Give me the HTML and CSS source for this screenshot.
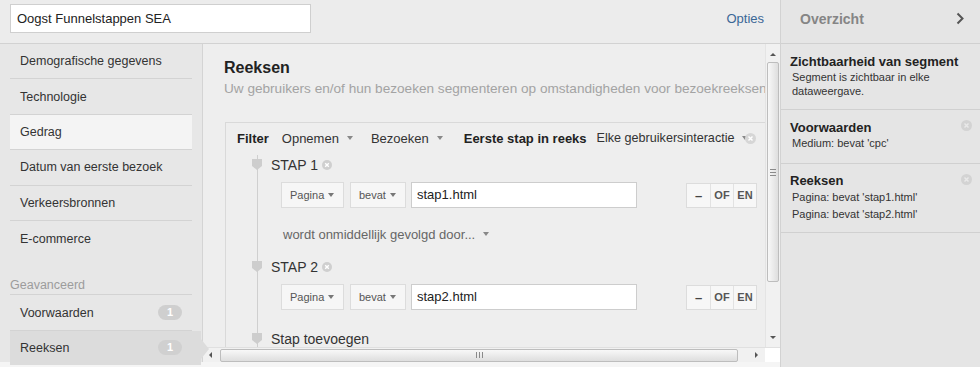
FILE: index.html
```html
<!DOCTYPE html>
<html lang="nl">
<head>
  <meta charset="UTF-8" />
  <title>Segment bewerken</title>
  <link rel="stylesheet" href="styles.css">
</head>
<body>
  <div class="app">
    <div class="editor">
      <header class="topbar">
        <div class="name-input">Oogst Funnelstappen SEA</div>
        <a class="options">Opties</a>
      </header>

      <div class="workspace">
        <nav class="nav">
          <div class="nav-item">Demografische gegevens</div>
          <div class="nav-item">Technologie</div>
          <div class="nav-item active">Gedrag</div>
          <div class="nav-item">Datum van eerste bezoek</div>
          <div class="nav-item">Verkeersbronnen</div>
          <div class="nav-item last">E-commerce</div>

          <div class="nav-group">Geavanceerd</div>
          <div class="nav-item">Voorwaarden <span class="badge">1</span></div>
          <div class="nav-item selected">Reeksen <span class="badge">1</span></div>
        </nav>

        <main class="main">
          <div class="viewport">
            <div class="content">
              <h2 class="title">Reeksen</h2>
              <p class="subtitle">Uw gebruikers en/of hun bezoeken segmenteren op omstandigheden voor bezoekreeksen.</p>

              <div class="filter-box">
                <div class="filter-row">
                  <b class="f-label">Filter</b>
                  <span class="drop f-include">Opnemen <i class="caret"></i></span>
                  <span class="drop f-scope">Bezoeken <i class="caret"></i></span>
                  <b class="f-first">Eerste stap in reeks</b>
                  <span class="drop f-any">Elke gebruikersinteractie <i class="caret"></i></span>
                  <svg class="remove dim" width="11" height="11" viewBox="0 0 11 11"><circle cx="5.5" cy="5.5" r="5.5" fill="#d6d6d6"/><path d="M3.5 3.5l4 4M7.5 3.5l-4 4" stroke="#fff" stroke-width="1.5"/></svg>
                </div>

                <div class="steps">
                  <div class="step-head">
                    <svg class="marker" width="10" height="11" viewBox="0 0 10 11"><path d="M0 0h10v7l-5 4l-5-4z" fill="#cdcdcd"/></svg>
                    STAP 1
                    <svg class="remove" width="10" height="10" viewBox="0 0 10 10"><circle cx="5" cy="5" r="5" fill="#cfcfcf"/><path d="M3.2 3.2l3.6 3.6M6.8 3.2l-3.6 3.6" stroke="#fff" stroke-width="1.4"/></svg>
                  </div>
                  <div class="cond-row">
                    <span class="select wide">Pagina <i class="caret"></i></span>
                    <span class="select">bevat <i class="caret"></i></span>
                    <div class="value">stap1.html</div>
                    <div class="logic">
                      <span class="minus">&ndash;</span><span>OF</span><span>EN</span>
                    </div>
                  </div>

                  <div class="follow">wordt onmiddellijk gevolgd door... <i class="caret"></i></div>

                  <div class="step-head step2">
                    <svg class="marker" width="10" height="11" viewBox="0 0 10 11"><path d="M0 0h10v7l-5 4l-5-4z" fill="#cdcdcd"/></svg>
                    STAP 2
                    <svg class="remove" width="10" height="10" viewBox="0 0 10 10"><circle cx="5" cy="5" r="5" fill="#cfcfcf"/><path d="M3.2 3.2l3.6 3.6M6.8 3.2l-3.6 3.6" stroke="#fff" stroke-width="1.4"/></svg>
                  </div>
                  <div class="cond-row">
                    <span class="select wide">Pagina <i class="caret"></i></span>
                    <span class="select">bevat <i class="caret"></i></span>
                    <div class="value">stap2.html</div>
                    <div class="logic">
                      <span class="minus">&ndash;</span><span>OF</span><span>EN</span>
                    </div>
                  </div>

                  <div class="step-head add">
                    <svg class="marker" width="10" height="11" viewBox="0 0 10 11"><path d="M0 0h10v7l-5 4l-5-4z" fill="#cdcdcd"/></svg>
                    Stap toevoegen
                  </div>
                </div>
              </div>
            </div>

            <div class="vscroll">
              <span class="arrow up"></span>
              <div class="vthumb"><span class="grip"></span></div>
              <span class="arrow down"></span>
            </div>
          </div>

          <div class="hscroll">
            <span class="arrow left"></span>
            <div class="hthumb"><span class="grip"></span></div>
            <span class="arrow right"></span>
            <span class="corner"></span>
          </div>
        </main>
      </div>
      <div class="footer-strip"></div>
    </div>

    <aside class="summary">
      <div class="summary-head">
        <span>Overzicht</span>
        <svg width="8" height="13" viewBox="0 0 8 13"><path d="M1.5 1.5l5 5l-5 5" fill="none" stroke="#555" stroke-width="2"/></svg>
      </div>
      <section class="summary-block">
        <h3>Zichtbaarheid van segment</h3>
        <p>Segment is zichtbaar in elke dataweergave.</p>
      </section>
      <section class="summary-block cond">
        <h3>Voorwaarden</h3>
        <p>Medium: bevat 'cpc'</p>
        <svg class="block-remove" width="11" height="11" viewBox="0 0 11 11"><circle cx="5.5" cy="5.5" r="5.5" fill="#d3d3d3"/><path d="M3.5 3.5l4 4M7.5 3.5l-4 4" stroke="#e9e9e9" stroke-width="1.5"/></svg>
      </section>
      <section class="summary-block seq">
        <h3>Reeksen</h3>
        <p>Pagina: bevat 'stap1.html'</p>
        <p>Pagina: bevat 'stap2.html'</p>
        <svg class="block-remove" width="11" height="11" viewBox="0 0 11 11"><circle cx="5.5" cy="5.5" r="5.5" fill="#d3d3d3"/><path d="M3.5 3.5l4 4M7.5 3.5l-4 4" stroke="#e9e9e9" stroke-width="1.5"/></svg>
      </section>
    </aside>
  </div>
</body>
</html>
```

FILE: styles.css
```css
* { margin: 0; padding: 0; box-sizing: border-box; }

body {
  width: 980px;
  height: 367px;
  overflow: hidden;
  font-family: "Liberation Sans", Arial, sans-serif;
  font-size: 13px;
  color: #333;
  background: #f4f4f4;
}

.app {
  display: flex;
  height: 367px;
}

/* left side: name bar, navigation and editor */
.editor {
  width: 780px;
  display: flex;
  flex-direction: column;
}

.topbar {
  height: 44px;
  border-bottom: 1px solid #d2d2d2;
  background: #ececec;
  display: flex;
  align-items: flex-start;
  padding: 4px 16px 0 10px;
}

.name-input {
  width: 301px;
  height: 29px;
  background: #fff;
  border: 1px solid #cfcfcf;
  padding: 0 6px;
  line-height: 27px;
  color: #222;
}

.options {
  margin-left: auto;
  margin-top: 7px;
  color: #3a6796;
  line-height: 16px;
}

.workspace {
  display: flex;
  height: 318px;
}

.nav {
  width: 203px;
  background: #e7e7e7;
  border-right: 1px solid #d4d4d4;
  position: relative;
  z-index: 2;
  font-size: 12.5px;
}

.nav-item {
  position: relative;
  margin: 0 10px;
  height: 35.4px;
  padding: 0 10px;
  display: flex;
  align-items: center;
  border-bottom: 1px solid #d3d3d3;
  color: #333;
}

.nav-item.active { background: #f4f4f4; }
.nav-item.last { border-bottom: none; }

.nav-group {
  margin: 22px 10px 0;
  height: 17px;
  line-height: 15px;
  color: #9c9c9c;
  border-bottom: 1px solid #d3d3d3;
}

.nav-item.selected {
  background: #dcdcdc;
  margin-right: 1px;
  padding-right: 19px;
  border-bottom: none;
  height: 34px;
}

.nav-item.selected::after {
  content: "";
  position: absolute;
  right: -8px;
  top: 8px;
  border-left: 8px solid #dcdcdc;
  border-top: 10px solid transparent;
  border-bottom: 10px solid transparent;
}

.badge {
  margin-left: auto;
  width: 24px;
  height: 15px;
  border-radius: 8px;
  background: #cfcfcf;
  color: #fff;
  font-weight: bold;
  font-size: 11px;
  line-height: 15px;
  text-align: center;
}

.selected .badge { background: #d0d0d0; }

/* editor pane */
.main {
  width: 577px;
  background: #eeeeee;
  display: flex;
  flex-direction: column;
}

.viewport {
  display: flex;
  height: 303px;
}

.content {
  width: 562px;
  overflow: hidden;
  padding: 14px 0 0 21px;
}

.title {
  font-size: 16px;
  line-height: 20px;
  color: #222;
}

.subtitle {
  margin-top: 3px;
  line-height: 16px;
  font-size: 13.6px;
  color: #a3a3a3;
  white-space: nowrap;
}

.filter-box {
  margin-top: 25px;
  margin-left: 1px;
  width: 620px;
  border-top: 1px solid #d9d9d9;
  border-left: 1px solid #d9d9d9;
  padding: 5px 0 0 11px;
}

.filter-row {
  display: flex;
  align-items: center;
  height: 20px;
  color: #333;
  white-space: nowrap;
}

.filter-row b { color: #222; }
.f-include { margin-left: 13px; }
.f-scope { margin-left: 18px; }
.f-first { margin-left: 21px; }
.f-any { margin-left: 10px; font-size: 12.6px; }

.drop, .select, .follow {
  display: inline-flex;
  align-items: center;
  white-space: nowrap;
}

.caret {
  display: inline-block;
  margin-left: 8px;
  border-top: 4px solid #888;
  border-left: 3.5px solid transparent;
  border-right: 3.5px solid transparent;
}

.filter-row .remove { margin-left: -3px; margin-top: 1px; }

.steps {
  margin: 7px 0 0 20px;
  border-left: 1px solid #cfcfcf;
  padding-left: 13px;
  height: 200px;
}

.step-head {
  position: relative;
  height: 20px;
  display: flex;
  align-items: center;
  font-size: 14px;
  color: #333;
}

.step-head .marker {
  position: absolute;
  left: -19px;
  top: 4px;
}

.step-head .remove { margin-left: 4px; }

.step2 { margin-top: 13px; }
.add { margin-top: 19px; }

.cond-row {
  display: flex;
  align-items: center;
  margin-top: 7px;
  padding-left: 10px;
  height: 26px;
}

.select {
  height: 26px;
  background: #f6f6f6;
  border: 1px solid #dcdcdc;
  padding: 0 9px 0 8px;
  font-size: 11px;
  color: #555;
  margin-right: 5px;
  width: 56px;
  justify-content: space-between;
}

.select.wide { width: 63px; margin-right: 6px; }
.select .caret { margin-left: 0; border-top-color: #777; }

.value {
  width: 226px;
  height: 26px;
  background: #fff;
  border: 1px solid #cdcdcd;
  padding-left: 5px;
  line-height: 24px;
  color: #222;
}

.logic {
  margin-left: 49px;
  display: flex;
  height: 25px;
  border: 1px solid #dcdcdc;
  background: #f7f7f7;
}

.logic span {
  width: 23px;
  display: flex;
  align-items: center;
  justify-content: center;
  font-size: 11px;
  font-weight: bold;
  color: #555;
  border-left: 1px solid #e2e2e2;
}

.logic span:first-child { border-left: none; }
.logic .minus { font-size: 13px; color: #444; }

.follow {
  margin-top: 16px;
  padding-left: 12px;
  height: 20px;
  color: #666;
}

/* scrollbars */
.vscroll {
  width: 15px;
  background: #f1f1f1;
  border-left: 1px solid #e4e4e4;
  display: flex;
  flex-direction: column;
  align-items: center;
}

.arrow {
  display: block;
  flex: none;
}

.arrow.up {
  margin: 9px 0 6px;
  border-bottom: 3px solid #555;
  border-left: 3px solid transparent;
  border-right: 3px solid transparent;
}

.arrow.down {
  margin: auto 0 8px;
  border-top: 3px solid #555;
  border-left: 3px solid transparent;
  border-right: 3px solid transparent;
}

.vthumb {
  width: 12px;
  height: 220px;
  border: 1px solid #bdbdbd;
  border-radius: 2px;
  background: linear-gradient(to right, #f8f8f8, #dedede);
  display: flex;
  align-items: center;
  justify-content: center;
}

.grip {
  width: 6px;
  height: 7px;
  background: repeating-linear-gradient(to bottom, #8a8a8a 0 1px, transparent 1px 3px);
}

.hscroll {
  height: 15px;
  display: flex;
  align-items: center;
  background: #f1f1f1;
  border-top: 1px solid #e0e0e0;
}

.arrow.left {
  margin: 0 8px 0 6px;
  border-right: 3px solid #555;
  border-top: 3px solid transparent;
  border-bottom: 3px solid transparent;
}

.hthumb {
  width: 518px;
  height: 13px;
  border: 1px solid #bdbdbd;
  border-radius: 2px;
  background: linear-gradient(to bottom, #f8f8f8, #dedede);
  display: flex;
  align-items: center;
  justify-content: center;
}

.hthumb .grip {
  width: 7px;
  height: 6px;
  background: repeating-linear-gradient(to right, #8a8a8a 0 1px, transparent 1px 3px);
}

.arrow.right {
  margin-left: 17px;
  border-left: 3px solid #555;
  border-top: 3px solid transparent;
  border-bottom: 3px solid transparent;
}

.corner {
  margin-left: auto;
  width: 15px;
  height: 15px;
  background: #fff;
}

.footer-strip {
  flex: 1;
  background: #f5f5f5;
}

/* summary panel */
.summary {
  width: 200px;
  background: #e5e5e5;
  border-left: 1px solid #d2d2d2;
}

.summary-head {
  height: 44px;
  border-bottom: 1px solid #d0d0d0;
  display: flex;
  align-items: center;
  padding: 0 16px 6px 19px;
  font-size: 14px;
  font-weight: bold;
  color: #858585;
}

.summary-head svg { margin-left: auto; }

.summary-block {
  position: relative;
  border-bottom: 1px solid #d0d0d0;
  padding: 10px 10px 11px 9px;
}

.summary-block h3 {
  font-size: 13px;
  line-height: 16px;
  color: #222;
}

.summary-block p {
  font-size: 11px;
  line-height: 14px;
  color: #333;
  padding-left: 2px;
}

.summary-block.cond { padding-bottom: 13px; }
.summary-block.seq { padding: 9px 10px 9px 9px; }
.summary-block.seq p { line-height: 17px; }

.block-remove {
  position: absolute;
  right: 8px;
  top: 10px;
}
```
